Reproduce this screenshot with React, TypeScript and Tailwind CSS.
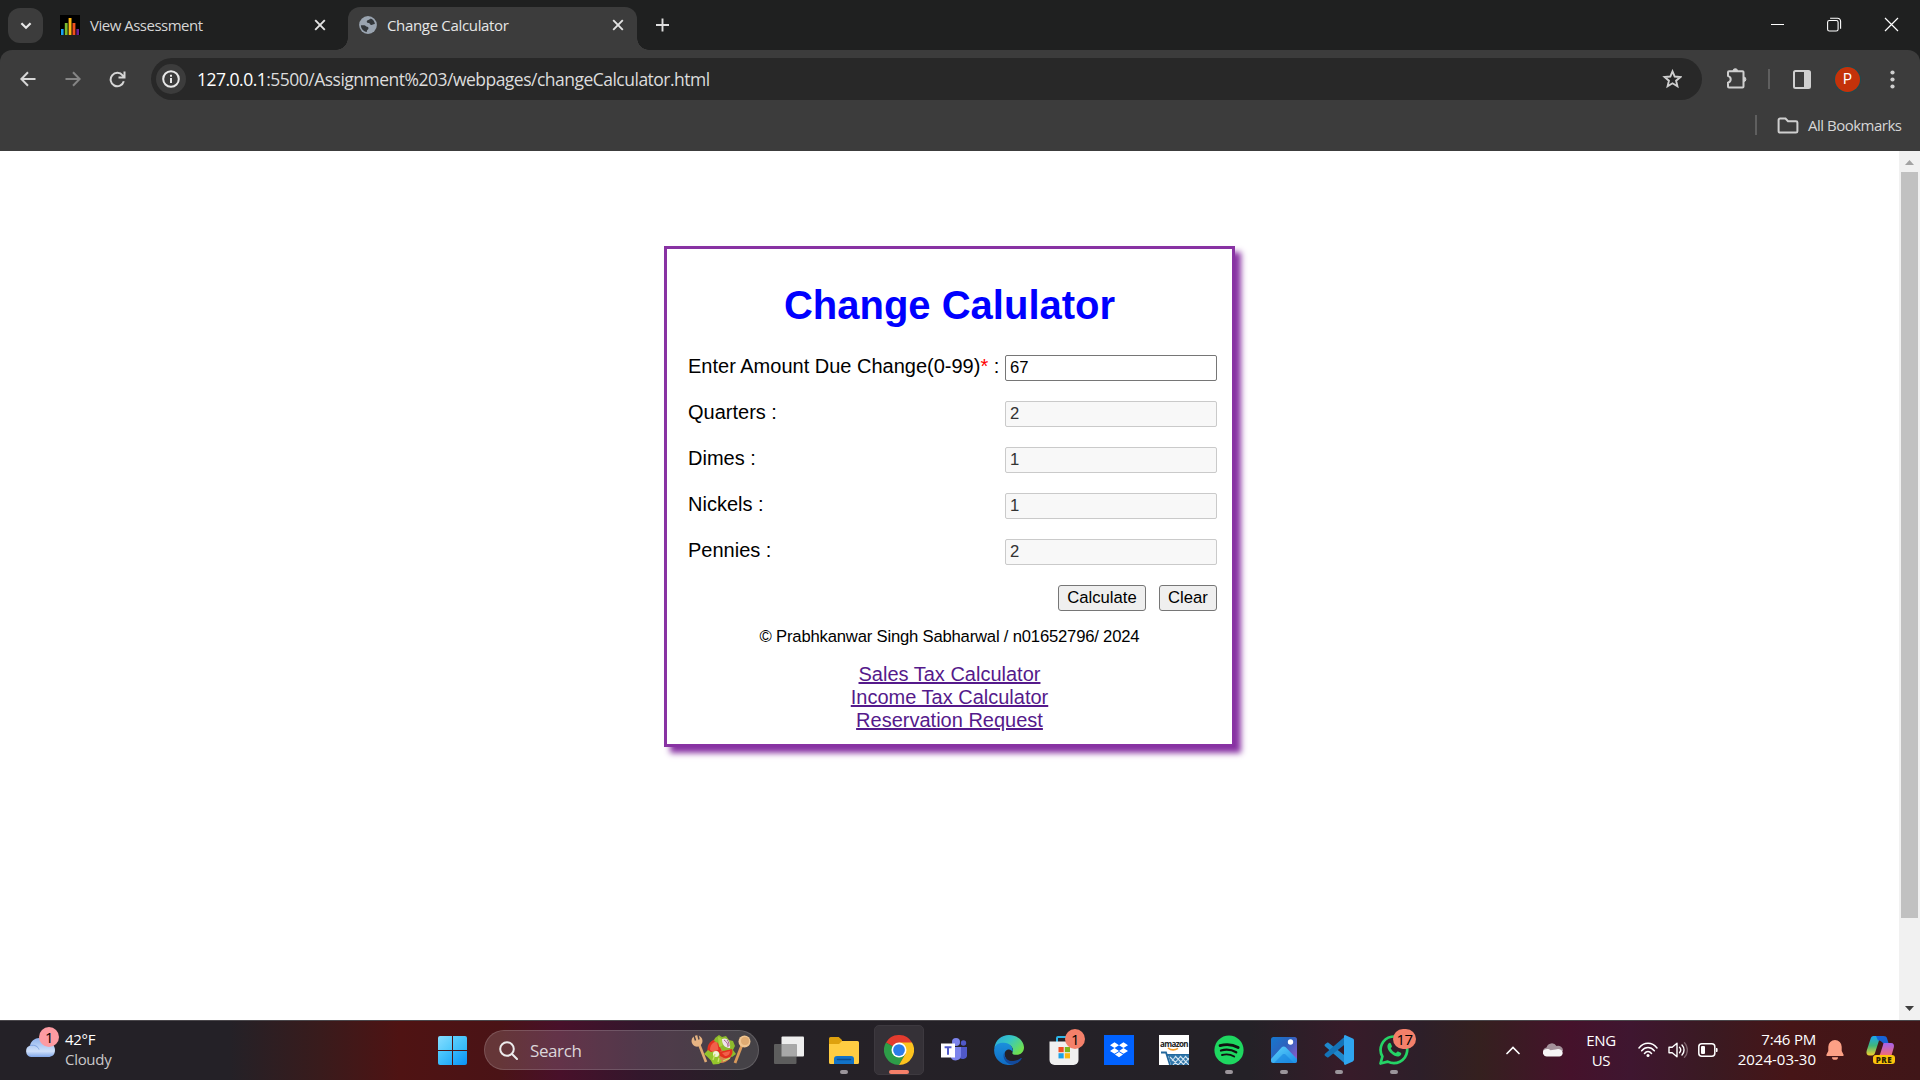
import type { ReactNode } from "react";

const UI = "font-['Open_Sans','Noto_Sans',sans-serif]";
const ARIAL = "font-['Liberation_Sans',Arial,sans-serif]";

function CloseX() {
  return (
    <svg width="12" height="12" viewBox="0 0 12 12" fill="none" stroke="#e3e3e3" strokeWidth="1.9">
      <path d="M1.2 1.2l9.6 9.6M10.8 1.2l-9.6 9.6" />
    </svg>
  );
}

function TabStrip() {
  return (
    <div className="flex h-[50px] w-full bg-[#1f2020]">
      <div className="mt-2 ml-2 flex h-[35px] w-[35px] items-center justify-center rounded-[12px] bg-[#3c3c3c]">
        <svg width="12" height="8" viewBox="0 0 12 8" fill="none" stroke="#e8e8e8" strokeWidth="2.2">
          <path d="M1.4 1.2L6 5.8l4.6-4.6" />
        </svg>
      </div>
      <div className="ml-[17px] flex h-[50px] w-[276px] items-center">
        <svg width="20" height="20" viewBox="0 0 20 20" className="shrink-0">
          <rect width="20" height="20" fill="#000" />
          <rect x="1" y="14" width="2.6" height="6" fill="#1ba1f2" />
          <rect x="4.8" y="8" width="2.8" height="12" fill="#7cbb2e" />
          <rect x="8.6" y="3" width="2.9" height="17" fill="#fdb813" />
          <rect x="12.5" y="8" width="2.9" height="12" fill="#f0501e" />
          <rect x="16.4" y="14" width="2.6" height="6" fill="#6a2191" />
        </svg>
        <span className="ml-[10px] w-[224px] text-[15px] tracking-[-0.5px] whitespace-nowrap text-[#d6d6d6]">View Assessment</span>
        <CloseX />
      </div>
      <div className="h-3 w-3 self-end bg-[radial-gradient(circle_at_0_0,transparent_11.5px,#3c3c3c_12px)]" />
      <div className="mt-[7px] flex h-[43px] w-[289px] items-center rounded-t-[12px] bg-[#3c3c3c] pb-[7px]">
        <svg width="18" height="18" viewBox="0 0 18 18" className="ml-[11px] shrink-0">
          <circle cx="9" cy="9" r="8.9" fill="#9aa4b0" />
          <path d="M1.900 9.200l3.300.1c1.400.1 1.600 1.400 3 1.400 1.300.1 1.300 1 1.200 2.100 0 1-1.700.9-1.600 3.100C4.500 15.600 1.900 12.600 1.900 9.200zM11.600 2.400c-.4 1.700-2.900.9-3.700 2.500-.7 1.500.8 2 2.100 2.100 1 .2 1 1.900 2.200 2 1.500.2 1.600-1 3.700-.9C15.700 5.400 13.900 3.100 11.600 2.400z" fill="#33373b" />
        </svg>
        <span className="ml-[10px] w-[225px] text-[15px] tracking-[-0.33px] whitespace-nowrap text-[#e6e6e6]">Change Calculator</span>
        <CloseX />
      </div>
      <div className="h-3 w-3 self-end bg-[radial-gradient(circle_at_100%_0,transparent_11.5px,#3c3c3c_12px)]" />
      <svg className="mt-[18px] ml-[6px]" width="14" height="14" viewBox="0 0 14 14" stroke="#dedede" strokeWidth="1.9">
        <path d="M7.500 .5v13M1 7h13" />
      </svg>
      <div className="mt-[17px] mr-[21px] ml-auto flex h-[15px] gap-[42px]">
        <svg width="15" height="15" viewBox="0 0 15 15" stroke="#fff"><path d="M1 7.500h13" /></svg>
        <svg width="15" height="15" viewBox="0 0 15 15" fill="none" stroke="#fff" strokeWidth="1.100">
          <rect x=".6" y="3.500" width="10.500" height="10.500" rx="1.800" />
          <path d="M3.100 1.200h7.500a3 3 0 0 1 3 3v7.600" />
        </svg>
        <svg width="15" height="15" viewBox="0 0 15 15" stroke="#fff" strokeWidth="1.200"><path d="M1 1l13 13M14 1L1 14" /></svg>
      </div>
    </div>
  );
}

function Toolbar() {
  return (
    <div className="bg-[#1f2020]">
      <div className="flex h-[101px] flex-col rounded-t-[12px] bg-[#3c3c3c]">
        <div className="mt-[8px] flex h-[42px] items-center">
          <svg className="ml-[20px]" width="16" height="16" viewBox="0 0 16 16" fill="none" stroke="#d6d6d6" strokeWidth="2">
            <path d="M15.500 8H1.600M8 1.300L1.400 8 8 14.700" />
          </svg>
          <svg className="ml-[29px]" width="16" height="16" viewBox="0 0 16 16" fill="none" stroke="#858585" strokeWidth="2">
            <path d="M.5 8h13.900M8 1.300L14.600 8 8 14.700" />
          </svg>
          <svg className="ml-[28px]" width="17" height="17" viewBox="0 0 17 17" fill="none" stroke="#d6d6d6" strokeWidth="2">
            <path d="M14.800 10.300A6.700 6.700 0 1 1 13.600 4.400L15.200 6M15.500.5V6.500H9.500" />
          </svg>
          <div className="ml-[25px] flex h-[42px] w-[1551px] items-center rounded-full bg-[#282828]">
            <div className="ml-[5px] flex h-[30px] w-[30px] items-center justify-center rounded-full bg-[#3c3c3c]">
              <svg width="18" height="18" viewBox="0 0 18 18" fill="none" stroke="#e8e8e8" strokeWidth="2">
                <circle cx="9" cy="9" r="7.800" />
                <path d="M9 8v5M9 4.800v2" />
              </svg>
            </div>
            <span className="ml-[11px] text-[17.500px] tracking-[-0.51px] whitespace-nowrap text-[#dcdcdc]">
              <span className="text-white">127.0.0.1</span>:5500/Assignment%203/webpages/changeCalculator.html
            </span>
            <svg className="mr-[20px] ml-auto" width="20" height="20" viewBox="0 0 20 20" fill="none" stroke="#cfcfcf" strokeWidth="1.900">
              <path d="M10.500 2.300l2.200 5.200 5.700.5-4.300 3.700 1.300 5.500L10.500 14.300l-4.900 2.900 1.300-5.500L2.600 8l5.700-.5z" />
            </svg>
          </div>
          <svg className="ml-[23px]" width="23" height="22" viewBox="0 0 23 22" fill="none" stroke="#cfcfcf" strokeWidth="2">
            <path d="M4 3.200h13.500a1 1 0 0 1 1 1V18.500a1 1 0 0 1-1 1H4a1 1 0 0 1-1-1v-3.800c3.600-1.200 3.600-5.600 0-6.800V4.200a1 1 0 0 1 1-1z" />
            <path d="M8 3a2.300 2.300 0 0 1 4.600 0zM18.600 9a2.300 2.300 0 0 1 0 4.600z" fill="#cfcfcf" strokeWidth="1" />
          </svg>
          <div className="ml-[20px] h-[20px] w-[2px] bg-[#5f5f5f]" />
          <svg className="ml-[23px]" width="18" height="19" viewBox="0 0 18 19" fill="none" stroke="#cfcfcf" strokeWidth="2">
            <rect x="1" y="1" width="16" height="17" rx="1.500" />
            <path d="M11 1h6v17h-6z" fill="#cfcfcf" stroke="none" />
          </svg>
          <div className="ml-[24px] flex h-[25px] w-[25px] items-center justify-center rounded-full bg-[#c4320a] font-['Roboto',sans-serif] text-[14px] text-white ring-1 ring-[#1e4a4f]">P</div>
          <svg className="ml-[30px]" width="5" height="19" viewBox="0 0 5 19" fill="#cfcfcf">
            <circle cx="2.500" cy="2.500" r="2.100" /><circle cx="2.500" cy="9.500" r="2.100" /><circle cx="2.500" cy="16.500" r="2.100" />
          </svg>
        </div>
        <div className="mt-[9px] mr-[17px] flex h-[32px] items-center justify-end">
          <div className="h-[20px] w-[2px] bg-[#5f5f5f]" />
          <svg className="ml-[20px]" width="22" height="17" viewBox="0 0 22 17" fill="none" stroke="#cfcfcf" strokeWidth="2">
            <path d="M3 1.500h5.500l2.500 2.700h8a1.400 1.400 0 0 1 1.400 1.400v8.600a1.400 1.400 0 0 1-1.400 1.400H3a1.400 1.400 0 0 1-1.400-1.400V2.900A1.400 1.400 0 0 1 3 1.500z" />
          </svg>
          <span className="ml-[9px] w-[95px] text-[15px] tracking-[-0.5px] whitespace-nowrap text-[#d6d6d6]">All Bookmarks</span>
        </div>
      </div>
    </div>
  );
}

function Row({ label, value, disabled = true }: { label: ReactNode; value: string; disabled?: boolean }) {
  return (
    <div className="mb-[20px] flex h-[26px] items-start justify-between">
      <label className="text-[20px] leading-[23px] whitespace-pre">{label}</label>
      <div className={disabled
        ? "flex h-[26px] w-[212px] items-center rounded-[2px] border border-[#cacaca] bg-[#f8f8f8] px-[4px] pb-[2px] text-[16.670px] text-[#333]"
        : "flex h-[26px] w-[212px] items-center rounded-[2px] border border-[#767676] bg-white px-[4px] pb-[2px] text-[16.670px]"}>{value}</div>
    </div>
  );
}

function CalcButton({ children, className }: { children: ReactNode; className: string }) {
  return (
    <button className={"flex h-[26px] items-center justify-center rounded-[3px] border border-[#767676] bg-[#efefef] text-[16.670px] leading-none " + className}>
      {children}
    </button>
  );
}

function Page() {
  return (
    <div className="flex h-[869px] bg-white">
      <div className={"flex flex-1 justify-center " + ARIAL}>
        <div className="mt-[95px] h-[501px] w-[571px] border-[3px] border-[#8832a3] bg-white pr-[15px] pl-[21px] text-black shadow-[6px_6px_6px_#8832a3]">
          <h1 className="mt-[33px] mb-[27px] -ml-[6px] text-center text-[40px] leading-[46px] font-bold text-[#00f]">Change Calulator</h1>
          <Row label={<>Enter Amount Due Change(0-99)<span className="text-[#f00]">*</span> :</>} value="67" disabled={false} />
          <Row label="Quarters :" value="2" />
          <Row label="Dimes :" value="1" />
          <Row label="Nickels :" value="1" />
          <Row label="Pennies :" value="2" />
          <div className="flex justify-end gap-[13px]">
            <CalcButton className="w-[88px]">Calculate</CalcButton>
            <CalcButton className="w-[58px]">Clear</CalcButton>
          </div>
          <p className="mt-[16px] -ml-[6px] text-center text-[16.670px] leading-[19px] tracking-[-0.2px]">© Prabhkanwar Singh Sabharwal / n01652796/ 2024</p>
          <div className="mt-[17px] -ml-[6px] flex flex-col items-center text-[20px] leading-[23px] text-[#551a8b]">
            <a className="underline">Sales Tax Calculator</a>
            <a className="underline">Income Tax Calculator</a>
            <a className="underline">Reservation Request</a>
          </div>
        </div>
      </div>
      <div className="flex w-[21px] flex-col items-center bg-[#f1f1f1]">
        <svg className="mt-[9px]" width="9" height="5" viewBox="0 0 9 5"><path d="M0 5L4.500 0 9 5z" fill="#a3a3a3" /></svg>
        <div className="mt-[7px] h-[746px] w-[17px] bg-[#c1c1c1]" />
        <svg className="mt-auto mb-[9px]" width="9" height="5" viewBox="0 0 9 5"><path d="M0 0L4.500 5 9 0z" fill="#3f3f3f" /></svg>
      </div>
    </div>
  );
}

function AppTile({ children, dot, active }: { children: ReactNode; dot?: boolean; active?: boolean }) {
  return (
    <div className={active
      ? "relative flex h-[50px] w-[50px] items-center justify-center rounded-[5px] border border-[#3d393f] bg-[#353137]"
      : "relative flex h-[50px] w-[50px] items-center justify-center"}>
      {children}
      {dot && <div className="absolute bottom-[1px] left-[21px] h-[4px] w-[8px] rounded-full bg-[#9b959b]" />}
      {active && <div className="absolute bottom-0 left-[14px] h-[4px] w-[20px] rounded-full bg-[#f4806a]" />}
    </div>
  );
}

function Badge({ children, className }: { children: ReactNode; className: string }) {
  return <div className={"absolute flex h-5 items-center justify-center rounded-full text-[15px] leading-none tracking-[-0.5px] text-black " + className}>{children}</div>;
}

function Salad() {
  return (
    <svg width="60" height="32" viewBox="0 0 60 32">
      <path d="M8 10l7 18" stroke="#e0aa74" strokeWidth="2.600" />
      <ellipse cx="6" cy="7" rx="5.500" ry="5.800" fill="#e6b383" />
      <path d="M3 1.500l1.500 5M7 1l1 4.500" stroke="#4a4148" strokeWidth="1.500" />
      <path d="M51 11l-7 18" stroke="#d99a5b" strokeWidth="2.800" />
      <ellipse cx="53.500" cy="7.500" rx="6" ry="6" fill="#f0c591" />
      <ellipse cx="54" cy="7" rx="4" ry="4" fill="#dfab72" />
      <circle cx="29.500" cy="16.500" r="12.500" fill="#d8814a" />
      <path d="M16.500 18c-1-8 4-13 11-13l3 12-9 4z" fill="#e2301f" />
      <path d="M19 16c0-5 3-8 7-8.500l1.500 8-5 3z" fill="#f2604a" />
      <path d="M24 4l4-3 3 2 4-1 3 4 4 1 2 5-2 4 3 4-4 3-5-3-6-5-3-6-4-2z" fill="#8dbb2c" />
      <path d="M27 3c5 1 6 5 4 9l-3 1z" fill="#a9d13c" />
      <path d="M31 5c5-2 9 2 8 9-4 0-8-2-8-9z" fill="#efe3ea" />
      <path d="M33 6c3 2 4 4 4 7M36 6c2 2 2 4 2 6" stroke="#a8648a" fill="none" />
      <path d="M28 18l13-3c2 5-2 10-8 9l-6-3z" fill="#e2301f" />
      <path d="M31 19l8-2c0 3-2 5-5 5z" fill="#f2604a" />
      <path d="M13 20l4-4 3 2 6-1 3 3-1 4 3 3-3 3-6 .500-2-4-4-4z" fill="#94c52c" />
      <circle cx="25" cy="20" r="3" fill="#f1f3d8" />
      <path d="M22 26l2-6M32 27l7-3M27 28l1-4" stroke="#c9e36a" strokeWidth="1.300" />
    </svg>
  );
}

function ChromeIcon() {
  return (
    <svg width="30" height="30" viewBox="0 0 48 48">
      <path d="M24 24L3.200 12A24 24 0 0 1 44.800 12z" fill="#e33b2e" />
      <path d="M24 24L3.200 12A24 24 0 0 0 24 48L34.400 30z" fill="#2d9d48" />
      <path d="M24 12h20.800A24 24 0 0 1 24 48l10.400-18z" fill="#fcc31e" />
      <circle cx="24" cy="24" r="12" fill="#fff" />
      <circle cx="24" cy="24" r="9.400" fill="#2b7de9" />
    </svg>
  );
}

function TeamsIcon() {
  return (
    <svg width="26" height="24" viewBox="0 0 26 24">
      <circle cx="22.500" cy="5" r="2.700" fill="#5059c9" />
      <path d="M18 9h8v7.500a4 4 0 0 1-8 1z" fill="#5059c9" />
      <circle cx="15" cy="4" r="4" fill="#7b83eb" />
      <path d="M10 9h10v9a5.500 5.500 0 0 1-10 2z" fill="#7b83eb" />
      <rect y="5.500" width="14" height="14" fill="#fff" />
      <path d="M3.600 9.200h6.900M7 9.200v7.600" stroke="#5059c9" strokeWidth="2" />
    </svg>
  );
}

function EdgeIcon() {
  return (
    <svg width="30" height="30" viewBox="0 0 30 30">
      <defs>
        <linearGradient id="edgeTop" x1="0" y1="0" x2="1" y2="0.600"><stop offset="0" stopColor="#2aa7df" /><stop offset=".5" stopColor="#36c6c4" /><stop offset="1" stopColor="#6fe04f" /></linearGradient>
        <linearGradient id="edgeLeft" x1="0" y1="0" x2="0" y2="1"><stop offset="0" stopColor="#1b8fdc" /><stop offset="1" stopColor="#0f6cc4" /></linearGradient>
      </defs>
      <path d="M.3 13C1.500 5 7.500 0 15 0c9 0 15 6.300 15 12.500 0 4.400-3.300 7.300-7.400 7.300-3.200 0-4.700-1.100-4.200-2 1.800-3.300-.3-7.800-5.400-8.300C7 9 2 10.500.3 13z" fill="url(#edgeTop)" />
      <path d="M.2 14C1 9 5.500 7.600 10 7.700c6.500.2 9.600 5.300 8.600 9.300-1-2.400-3.300-3.200-5.300-2.200-3 1.500-3.500 5.200-1.400 8.500 1.600 2.600 3.600 5 7.600 6.200C10 32.200-.8 25 .2 14z" fill="url(#edgeLeft)" />
      <path d="M10.500 17c-1.400 6 4 9.500 9 9 3.500-.3 5.600-1.600 7.400-2.900.6-.4 1 .1.700.6-2 3.400-5.200 5.300-8.600 6C12 29.500 7.500 22.500 10.500 17z" fill="#134a9c" />
    </svg>
  );
}

function TaskbarApps() {
  return (
    <div className="ml-[5px] flex gap-[5px]">
      <AppTile>
        <svg width="30" height="28" viewBox="0 0 30 28">
          <rect x="7.500" y=".5" width="22.500" height="20" fill="#eeeeee" rx="1" />
          <rect x="0" y="8" width="22.500" height="20" fill="#5d5d5d" rx="1" />
          <path d="M7.500 8h15v12.500h-15z" fill="#a8a8a8" />
        </svg>
      </AppTile>
      <AppTile dot>
        <svg width="30" height="27" viewBox="0 0 30 27">
          <path d="M0 1.500A1.500 1.500 0 0 1 1.500 0h8.200L13 3v9H0z" fill="#dea10e" />
          <path d="M0 7h10l3-3h15.500A1.500 1.500 0 0 1 30 5.500V25.500A1.500 1.500 0 0 1 28.500 27h-27A1.500 1.500 0 0 1 0 25.500z" fill="#ffcd42" />
          <path d="M5 27v-5a3 3 0 0 1 3-3h14a3 3 0 0 1 3 3v5z" fill="#1273c8" />
          <path d="M8.500 22.500h13" stroke="#0b4d8f" strokeWidth="1.500" strokeLinecap="round" />
        </svg>
      </AppTile>
      <AppTile active><ChromeIcon /></AppTile>
      <AppTile><TeamsIcon /></AppTile>
      <AppTile><EdgeIcon /></AppTile>
      <AppTile>
        <svg width="30" height="30" viewBox="0 0 30 30">
          <path d="M8 8V3a1 1 0 0 1 1-1h11" stroke="#2cb5e8" strokeWidth="2" fill="none" />
          <path d="M.5 6.500h29V25a5 5 0 0 1-5 5H5.500a5 5 0 0 1-5-5z" fill="#f0f0f0" />
          <path d="M9.500 12h5.200v5.200H9.500z" fill="#f04e23" /><path d="M15.800 12H21v5.200h-5.200z" fill="#7db71b" />
          <path d="M9.500 18.200h5.200v5.200H9.500z" fill="#1ca2e6" /><path d="M15.800 18.200H21v5.200h-5.200z" fill="#fbb811" />
        </svg>
        <Badge className="top-[4px] left-[26px] w-5 bg-[#f4806a]">1</Badge>
      </AppTile>
      <AppTile>
        <div className="flex h-[30px] w-[30px] items-center justify-center bg-[#0062ff]">
          <svg width="18" height="16" viewBox="0 0 20 17" fill="#fff">
            <path d="M5 0l5 3.200-5 3.200L0 3.200zM15 0l5 3.200-5 3.200-5-3.200zM5 6.400l5 3.200-5 3.200-5-3.200zM15 6.400l5 3.200-5 3.200-5-3.200zM5.500 13.600l4.500-2.900 4.500 2.900-4.500 2.900z" />
          </svg>
        </div>
      </AppTile>
      <AppTile>
        <div className="flex h-[30px] w-[30px] flex-col items-center overflow-hidden bg-white">
          <span className="mt-[5px] h-[7px] text-[8px] leading-[7px] font-bold tracking-[-0.6px] text-[#222]">amazon</span>
          <svg width="30" height="18" viewBox="0 0 30 18" fill="none">
            <path d="M9 .8c3 2.600 7 2.400 10 .6" stroke="#f39a25" strokeWidth="1.600" />
            <path d="M2 5.500h5l4 12.500M8 8h22" stroke="#23699e" strokeWidth="1.800" />
            <path d="M9 8h21v10H12z" fill="#2f76aa" />
            <path d="M11 10l8 8M16 9l9 9M21 9l9 9M26 9l4 4M13 14l4-5M14 18l8-9M19 18l8-9M24 18l6-7" stroke="#d5e6f1" strokeWidth="1.100" />
          </svg>
        </div>
      </AppTile>
      <AppTile dot>
        <svg width="30" height="30" viewBox="0 0 30 30" fill="none" stroke="#111" strokeLinecap="round">
          <circle cx="15" cy="15" r="14.600" fill="#1ed760" stroke="none" />
          <path d="M6 10.600c6-1.700 12.800-1.200 18.200 1.900" strokeWidth="2.700" />
          <path d="M7 15.500c5.200-1.500 10.600-.9 15.200 1.800" strokeWidth="2.300" />
          <path d="M8 20c4.300-1.100 8.500-.7 12.200 1.500" strokeWidth="1.900" />
        </svg>
      </AppTile>
      <AppTile dot>
        <svg width="26" height="26" viewBox="0 0 26 26">
          <defs>
            <linearGradient id="photoSky" x1="0" y1="0" x2="1" y2=".8"><stop offset="0" stopColor="#1578cf" /><stop offset=".5" stopColor="#2c62bd" /><stop offset="1" stopColor="#8a5cc8" /></linearGradient>
            <linearGradient id="photoHill" x1="0" y1="0" x2="1" y2="1"><stop offset="0" stopColor="#5fd3fb" /><stop offset="1" stopColor="#1a8fe8" /></linearGradient>
            <clipPath id="photoClip"><rect width="26" height="26" rx="2.500" /></clipPath>
          </defs>
          <g clipPath="url(#photoClip)">
            <rect width="26" height="26" fill="url(#photoSky)" />
            <path d="M0 22L10.500 10.500a3 3 0 0 1 4.500 0L26 22v4H0z" fill="url(#photoHill)" />
            <path d="M3 26l9-9 2 0 9 9z" fill="#1680dc" opacity=".55" />
            <circle cx="19.500" cy="5" r="2.700" fill="#fff" />
          </g>
        </svg>
      </AppTile>
      <AppTile dot>
        <svg width="30" height="30" viewBox="0 0 30 30">
          <path d="M1 9.300l2-1.600c.5-.4 1-.3 1.500 0L22 21.500v8L1 11.200c-.6-.5-.6-1.400 0-1.900z" fill="#1f88cc" />
          <path d="M1 20.700l2 1.600c.5.400 1 .3 1.500 0L22 8.500v-8L1 18.800c-.6.5-.6 1.400 0 1.900z" fill="#1474b8" />
          <path d="M21.500.2L28.800 3.600c.7.300 1.200 1 1.200 1.800v19.200c0 .8-.5 1.500-1.200 1.800L21.500 29.800c-.6.300-1.300 0-1.500-.7V.9c.2-.7.900-1 1.500-.7z" fill="#2fa5ef" />
        </svg>
      </AppTile>
      <AppTile dot>
        <svg width="30" height="30" viewBox="0 0 30 30" fill="none">
          <path d="M1.500 28.500l1.900-7A13.300 13.300 0 1 1 8.700 26.600z" stroke="#25d366" strokeWidth="2.700" strokeLinejoin="round" />
          <path d="M9.700 8.200c.8-.8 1.700-.7 2.100.2l1.100 2.600c.2.500 0 1-1.200 2.200 1.200 2.300 2.700 3.800 5.200 4.900 1-1.200 1.500-1.900 2.200-1.600l2.700 1.300c.6.400.7 1.500-.2 2.500-2.100 2.300-6 1.200-9.200-1.700-3.200-2.800-5.600-7.500-2.700-10.400z" fill="#25d366" />
        </svg>
        <Badge className="top-[4px] left-[24px] w-[23px] bg-[#f4806a]">17</Badge>
      </AppTile>
    </div>
  );
}

function Tray() {
  return (
    <div className="mr-[24px] ml-auto flex h-full items-center text-[15px] leading-[20px] text-white">
      <svg width="14" height="9" viewBox="0 0 14 9" fill="none" stroke="#fff" strokeWidth="1.700" strokeLinecap="round"><path d="M1 7.500l6-6 6 6" /></svg>
      <svg className="ml-[23px]" width="20" height="14" viewBox="0 0 20 14">
        <path d="M0 9a4 4 0 0 1 3.500-4.500A5.500 5.500 0 0 1 13.500 3 5 5 0 0 1 20 8l-8 4z" fill="#a4929b" />
        <path d="M4 13.500a3.800 3.800 0 0 1-3-6.400c2-1.700 5-1.400 6.500.2l5-.8c3-1.500 6 0 6.500 1.500A3.500 3.500 0 0 1 16.500 13.500z" fill="#f7f5f6" />
      </svg>
      <div className="ml-[20px] w-[36px] text-center tracking-[-0.4px]"><div>ENG</div><div>US</div></div>
      <svg className="ml-[19px]" width="20" height="16" viewBox="0 0 20 16" fill="none" stroke="#fff" strokeWidth="1.500" strokeLinecap="round">
        <path d="M1 6C6-.2 14-.2 19 6M3.700 8.800c3.600-4.300 9-4.300 12.600 0M6.500 11.400c2-2.400 5-2.400 7 0" />
        <circle cx="10" cy="13.600" r="1.500" fill="#fff" stroke="none" />
      </svg>
      <svg className="ml-[10px]" width="20" height="18" viewBox="0 0 20 18" fill="none" stroke="#fff" strokeWidth="1.400" strokeLinejoin="round" strokeLinecap="round">
        <path d="M1 6.300h3.200L9 2.200v13.600l-4.800-4.100H1zM11.500 6.300a4 4 0 0 1 0 5.400M14 4a7.200 7.200 0 0 1 0 10" />
        <path d="M16.500 1.800a10.500 10.500 0 0 1 0 14.400" stroke="#7a5f68" />
      </svg>
      <svg className="ml-[10px]" width="20" height="14" viewBox="0 0 20 14" fill="none" stroke="#fff" strokeWidth="1.500">
        <rect x=".8" y=".8" width="16" height="12.400" rx="3" />
        <rect x="3" y="3" width="4" height="8" rx="1" fill="#fff" stroke="none" />
        <path d="M18 5h.6a1 1 0 0 1 1 1v2a1 1 0 0 1-1 1H18z" fill="#fff" stroke="none" />
      </svg>
      <div className="ml-[18px] w-[80px] pb-[3px] text-right whitespace-nowrap"><div className="tracking-[-0.2px]">7:46 PM</div><div>2024-03-30</div></div>
      <svg className="ml-[10px]" width="18" height="20" viewBox="0 0 18 20" fill="#fda085">
        <path d="M9 0a6.700 6.700 0 0 1 6.700 6.700V11l1.900 3.800c.3.600 0 1.200-.7 1.200H1.100c-.7 0-1-.6-.7-1.200L2.300 11V6.700A6.700 6.700 0 0 1 9 0zM6 17.200h6a3 2.600 0 0 1-6 0z" />
      </svg>
      <div className="relative ml-[22px] h-[30px] w-[30px]">
        <svg width="30" height="30" viewBox="0 0 30 30">
          <defs>
            <linearGradient id="copA" x1="0" y1="0" x2="0" y2="1"><stop offset="0" stopColor="#19a7f2" /><stop offset=".5" stopColor="#40b67a" /><stop offset="1" stopColor="#f3d12c" /></linearGradient>
            <linearGradient id="copB" x1="0" y1="0" x2="0" y2="1"><stop offset="0" stopColor="#a563ee" /><stop offset="1" stopColor="#f66a70" /></linearGradient>
          </defs>
          <path d="M7.500 1h9l-3.500 4.500-4 12.500c-.5 1.600-1.500 2.500-3 2.500H3.500C1 20.500 0 18.500.6 16L4.500 4c.5-2 1.500-3 3-3z" fill="url(#copA)" />
          <path d="M10 1h7.500c2 0 3 .7 3.600 2.500L22.500 8H17c-2-2-3-2.500-5-2.500z" fill="#1763d6" />
          <path d="M17.500 8h7.500c2.500 0 3.500 2 2.800 4.500l-2.500 8.500H11.500c1.500 0 2.300-1 2.800-2.500L17 10z" fill="url(#copB)" />
        </svg>
        <div className="absolute top-[20px] left-[7px] flex h-[9px] w-[22px] items-center justify-center rounded-[3px] bg-[#fcc40c] text-[8px] leading-none font-extrabold tracking-[0.5px] text-[#2c2200]">PRE</div>
      </div>
    </div>
  );
}

function Taskbar() {
  return (
    <div className="flex h-[60px] items-center border-t border-[#4a474b] bg-[linear-gradient(90deg,#242127_0px,#242127_230px,#391b1c_320px,#4f1313_400px,#4a1316_500px,#48102a_560px,#33172c_640px,#252127_740px,#242127_1250px,#371b29_1350px,#2d1f29_1420px,#35201f_1480px,#45122b_1570px,#3f1630_1630px,#3a1a22_1710px,#461517_1790px,#401618_1920px)] pb-[1px]">
      <div className="ml-[25px] flex h-full w-[402px] items-start">
        <div className="relative mt-[6px] h-[32px] w-[30px]">
          <svg className="absolute top-[10px] left-0" width="30" height="20" viewBox="0 0 30 20">
            <defs><linearGradient id="cl" x1="0" y1="0" x2="0" y2="1"><stop offset="0" stopColor="#8fb2ec" /><stop offset=".7" stopColor="#cfe0fa" /><stop offset="1" stopColor="#7fa6e8" /></linearGradient></defs>
            <path d="M6 20a6 6 0 0 1-1-11.500C7 1 16-2 21 5c5 0 9 3 9 8s-3 7-7 7z" fill="url(#cl)" />
            <path d="M5 8.500c5-1 8 1 9 4" stroke="#7ea3e3" fill="none" />
          </svg>
          <Badge className="top-0 left-[14px] w-5 bg-[#fd9ba2] text-[14px]">1</Badge>
        </div>
        <div className="mt-[8px] ml-[10px] text-[15px] leading-[20px] tracking-[-0.3px] text-white"><div>42°F</div><div className="text-[#c9c7c9]">Cloudy</div></div>
      </div>
      <div className="flex h-[50px] w-[50px] items-center justify-center">
        <div className="grid h-[29px] w-[29px] grid-cols-2 gap-[1px]">
          <div className="rounded-tl-[2px] bg-[linear-gradient(135deg,#86dcff,#4cc8fb)]" />
          <div className="rounded-tr-[2px] bg-[linear-gradient(135deg,#5ccffd,#31b6f8)]" />
          <div className="rounded-bl-[2px] bg-[linear-gradient(135deg,#52cbfd,#22a8f7)]" />
          <div className="rounded-br-[2px] bg-[linear-gradient(135deg,#36b8fb,#0a92f5)]" />
        </div>
      </div>
      <div className="ml-[7px] flex h-[40px] w-[275px] items-center rounded-full border border-white/15 bg-white/15 pl-[14px]">
        <svg width="19" height="19" viewBox="0 0 19 19" fill="none" stroke="#ecebec" strokeWidth="2" strokeLinecap="round"><circle cx="8" cy="8" r="6.800" /><path d="M13 13l5 5" /></svg>
        <span className="mt-px ml-[12px] text-[17px] tracking-[-0.4px] text-[#dcd6da]">Search</span>
        <span className="mr-[7px] ml-auto"><Salad /></span>
      </div>
      <TaskbarApps />
      <Tray />
    </div>
  );
}

export default function App() {
  return (
    <div className={"flex h-[1080px] w-[1920px] flex-col overflow-hidden bg-white " + UI}>
      <TabStrip />
      <Toolbar />
      <Page />
      <Taskbar />
    </div>
  );
}
